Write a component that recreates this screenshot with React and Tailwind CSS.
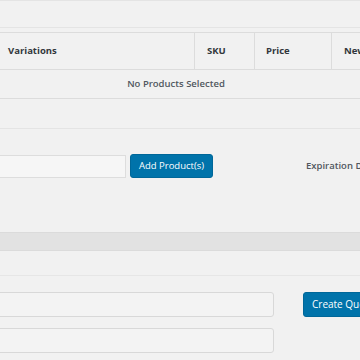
import React from "react";

export default function App() {
  return (
    <div className="w-[360px] h-[360px] overflow-hidden bg-[#f1f1f1] text-[#32373c] text-[9.5px] font-['Open_Sans',sans-serif]">
      {/* top strip */}
      <div className="h-[28px] border-t border-b border-[#e4e4e4]" />

      {/* product table */}
      <div className="mt-[4px] -ml-[100px] w-[552px]">
        <div className="flex h-[38px] border-t border-b border-[#dcdcdc] font-bold whitespace-nowrap">
          <div className="w-[294px] shrink-0 flex items-center pl-[108px]">Variations</div>
          <div className="w-[60px] shrink-0 border-l border-[#dcdcdc] flex items-center pl-[12px]">SKU</div>
          <div className="w-[77px] shrink-0 border-l border-[#dcdcdc] flex items-center pl-[11px]">Price</div>
          <div className="flex-1 border-l border-[#dcdcdc] flex items-center pl-[12px]">New Price</div>
        </div>
        <div className="h-[29px] border-b border-[#dcdcdc] flex items-center justify-center font-semibold text-[#50575e]">
          No Products Selected
        </div>
      </div>

      {/* add product row */}
      <div className="mt-[29px] border-t border-[#e4e4e4] h-[104px]">
        <div className="flex items-center mt-[25px] whitespace-nowrap">
          <div className="w-[126px] shrink-0 h-[23px] bg-[#f6f6f6] border border-[#dddddd] border-l-0" />
          <button className="ml-[4px] shrink-0 w-[83px] h-[24px] rounded-[3px] bg-[#0073aa] border border-[#006799] text-white text-[9.5px]">
            Add Product(s)
          </button>
          <span className="ml-[93px] shrink-0 font-semibold text-[#50575e]">Expiration Date</span>
        </div>
      </div>

      {/* section header band */}
      <div className="h-[19px] bg-[#e2e2e2] border-t border-b border-[#dbdbdb]" />

      <div className="mt-[24px] border-t border-[#e6e6e6]">
        <div className="flex mt-[16px] whitespace-nowrap">
          <div className="flex flex-col gap-[11px] shrink-0">
            <div className="w-[284px] h-[25px] -ml-[10px] rounded-[3px] border border-[#d8d8d8] bg-[#f3f3f3]" />
            <div className="w-[284px] h-[25px] -ml-[10px] rounded-[3px] border border-[#d8d8d8] bg-[#f3f3f3]" />
          </div>
          <button className="ml-[29px] shrink-0 h-[25px] pl-[8px] pr-[12px] rounded-[3px] bg-[#0073aa] border border-[#006799] text-white text-[10px]">
            Create Quote
          </button>
        </div>
      </div>
    </div>
  );
}
